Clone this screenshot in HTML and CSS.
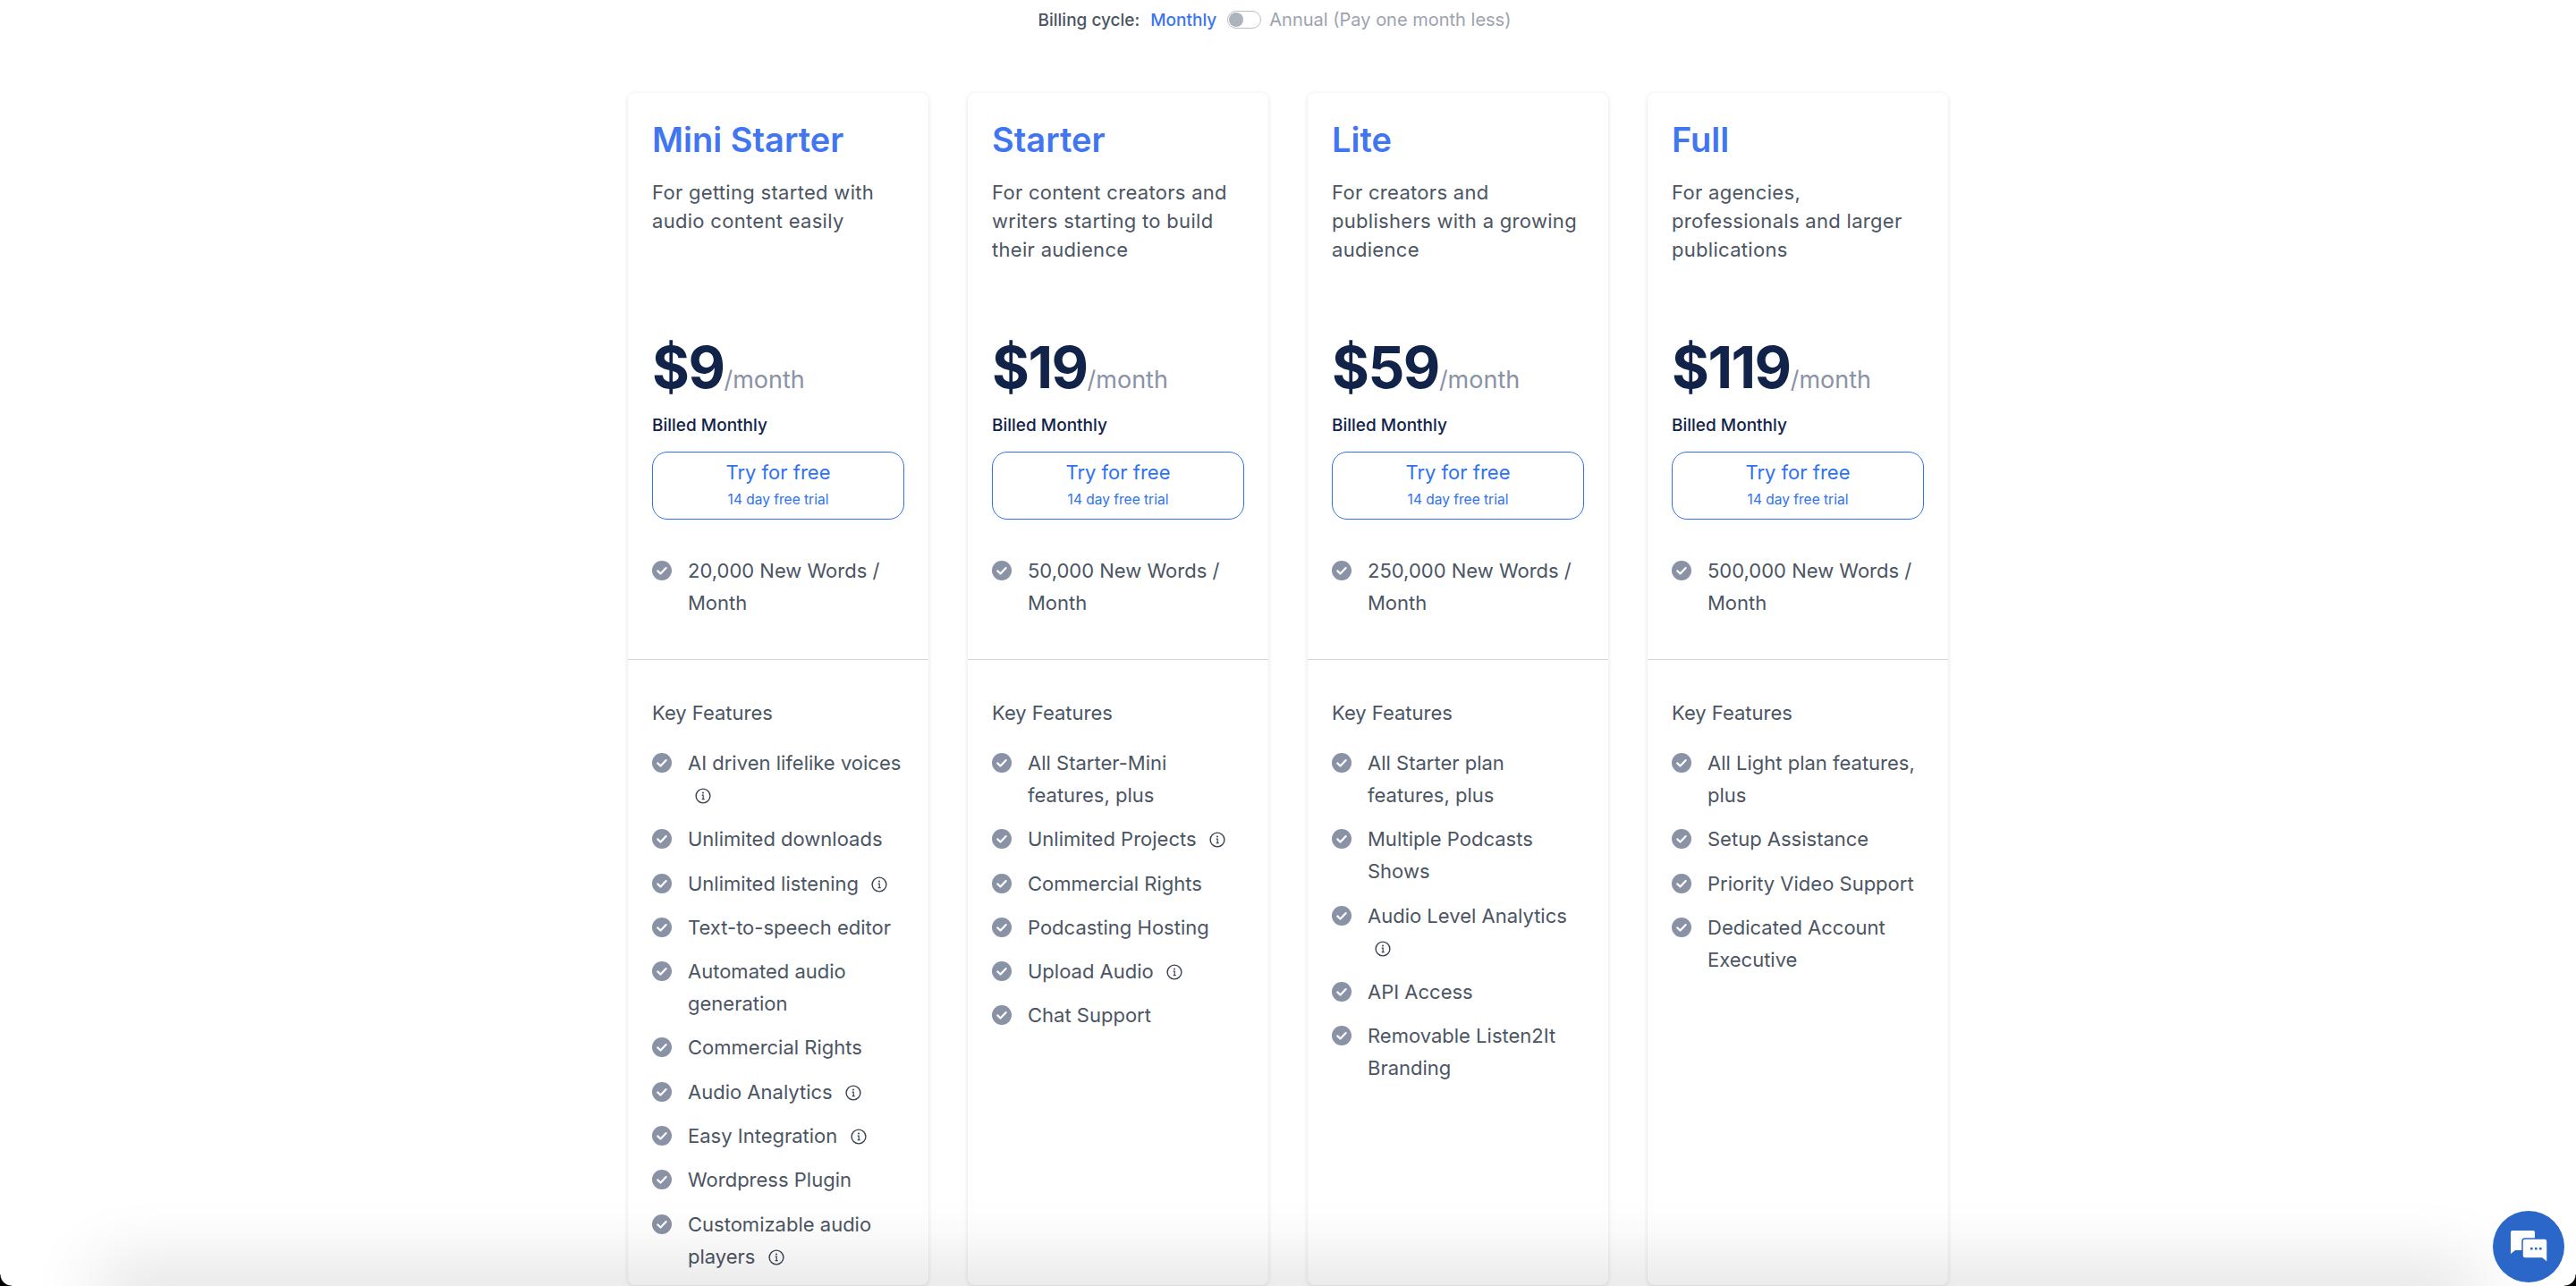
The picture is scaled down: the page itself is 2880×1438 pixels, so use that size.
FILE: index.html
```html
<!DOCTYPE html>
<html lang="en">
<head>
<meta charset="utf-8">
<title>Pricing</title>
<link rel="stylesheet" href="styles.css">
</head>
<body>
<svg class="defs" width="0" height="0" aria-hidden="true">
  <symbol id="chk" viewBox="0 0 22 22"><circle cx="11" cy="11" r="11" fill="#8a92a6"/><path d="M6.3 11.4l3.2 3.1 6.2-6.4" fill="none" stroke="#fff" stroke-width="2.2" stroke-linecap="round" stroke-linejoin="round"/></symbol>
  <symbol id="inf" viewBox="0 0 18 18"><circle cx="9" cy="9" r="7.9" fill="none" stroke="#374151" stroke-width="1.4"/><path d="M7.7 8.1H9.2V12.6M7.7 12.6h3" fill="none" stroke="#374151" stroke-width="1.2"/><circle cx="9" cy="5.6" r="1" fill="#374151"/></symbol>
</svg>
<header class="billing">
  <span class="billing-label">Billing cycle:</span>
  <span class="billing-active">Monthly</span>
  <span class="toggle"><span class="knob"></span></span>
  <span class="billing-off">Annual (Pay one month less)</span>
</header>
<main class="plans">
  <article class="card">
    <section class="top">
      <h2>Mini Starter</h2>
      <p class="desc">For getting started with audio content easily</p>
      <div class="price"><b>$9</b><span>/month</span></div>
      <p class="billed">Billed Monthly</p>
      <a class="cta"><span class="cta-main">Try for free</span><span class="cta-sub">14 day free trial</span></a>
      <ul class="list"><li><svg class="ck"><use href="#chk"/></svg><span>20,000 New Words / Month</span></li></ul>
    </section>
    <section class="bottom">
      <h3>Key Features</h3>
      <ul class="list">
        <li><svg class="ck"><use href="#chk"/></svg><span>AI driven lifelike voices <svg class="in"><use href="#inf"/></svg></span></li>
        <li><svg class="ck"><use href="#chk"/></svg><span>Unlimited downloads</span></li>
        <li><svg class="ck"><use href="#chk"/></svg><span>Unlimited listening <svg class="in"><use href="#inf"/></svg></span></li>
        <li><svg class="ck"><use href="#chk"/></svg><span>Text-to-speech editor</span></li>
        <li><svg class="ck"><use href="#chk"/></svg><span>Automated audio generation</span></li>
        <li><svg class="ck"><use href="#chk"/></svg><span>Commercial Rights</span></li>
        <li><svg class="ck"><use href="#chk"/></svg><span>Audio Analytics <svg class="in"><use href="#inf"/></svg></span></li>
        <li><svg class="ck"><use href="#chk"/></svg><span>Easy Integration <svg class="in"><use href="#inf"/></svg></span></li>
        <li><svg class="ck"><use href="#chk"/></svg><span>Wordpress Plugin</span></li>
        <li><svg class="ck"><use href="#chk"/></svg><span>Customizable audio players <svg class="in"><use href="#inf"/></svg></span></li>
      </ul>
    </section>
  </article>
  <article class="card">
    <section class="top">
      <h2>Starter</h2>
      <p class="desc">For content creators and writers starting to build their audience</p>
      <div class="price"><b>$19</b><span>/month</span></div>
      <p class="billed">Billed Monthly</p>
      <a class="cta"><span class="cta-main">Try for free</span><span class="cta-sub">14 day free trial</span></a>
      <ul class="list"><li><svg class="ck"><use href="#chk"/></svg><span>50,000 New Words / Month</span></li></ul>
    </section>
    <section class="bottom">
      <h3>Key Features</h3>
      <ul class="list">
        <li><svg class="ck"><use href="#chk"/></svg><span>All Starter-Mini features, plus</span></li>
        <li><svg class="ck"><use href="#chk"/></svg><span>Unlimited Projects <svg class="in"><use href="#inf"/></svg></span></li>
        <li><svg class="ck"><use href="#chk"/></svg><span>Commercial Rights</span></li>
        <li><svg class="ck"><use href="#chk"/></svg><span>Podcasting Hosting</span></li>
        <li><svg class="ck"><use href="#chk"/></svg><span>Upload Audio <svg class="in"><use href="#inf"/></svg></span></li>
        <li><svg class="ck"><use href="#chk"/></svg><span>Chat Support</span></li>
      </ul>
    </section>
  </article>
  <article class="card">
    <section class="top">
      <h2>Lite</h2>
      <p class="desc">For creators and publishers with a growing audience</p>
      <div class="price"><b>$59</b><span>/month</span></div>
      <p class="billed">Billed Monthly</p>
      <a class="cta"><span class="cta-main">Try for free</span><span class="cta-sub">14 day free trial</span></a>
      <ul class="list"><li><svg class="ck"><use href="#chk"/></svg><span>250,000 New Words / Month</span></li></ul>
    </section>
    <section class="bottom">
      <h3>Key Features</h3>
      <ul class="list">
        <li><svg class="ck"><use href="#chk"/></svg><span>All Starter plan features, plus</span></li>
        <li><svg class="ck"><use href="#chk"/></svg><span>Multiple Podcasts Shows</span></li>
        <li><svg class="ck"><use href="#chk"/></svg><span>Audio Level Analytics <svg class="in"><use href="#inf"/></svg></span></li>
        <li><svg class="ck"><use href="#chk"/></svg><span>API Access</span></li>
        <li><svg class="ck"><use href="#chk"/></svg><span>Removable Listen2It Branding</span></li>
      </ul>
    </section>
  </article>
  <article class="card">
    <section class="top">
      <h2>Full</h2>
      <p class="desc">For agencies, professionals and larger publications</p>
      <div class="price"><b>$119</b><span>/month</span></div>
      <p class="billed">Billed Monthly</p>
      <a class="cta"><span class="cta-main">Try for free</span><span class="cta-sub">14 day free trial</span></a>
      <ul class="list"><li><svg class="ck"><use href="#chk"/></svg><span>500,000 New Words / Month</span></li></ul>
    </section>
    <section class="bottom">
      <h3>Key Features</h3>
      <ul class="list">
        <li><svg class="ck"><use href="#chk"/></svg><span>All Light plan features, plus</span></li>
        <li><svg class="ck"><use href="#chk"/></svg><span>Setup Assistance</span></li>
        <li><svg class="ck"><use href="#chk"/></svg><span>Priority Video Support</span></li>
        <li><svg class="ck"><use href="#chk"/></svg><span>Dedicated Account Executive</span></li>
      </ul>
    </section>
  </article>
</main>
<div class="bottom-shade"></div>
<button class="chat" aria-label="Chat">
  <svg viewBox="0 0 41 36" width="41" height="36"><path d="M2 0h23a2 2 0 0 1 2 2v18a2 2 0 0 1-2 2H5l-5 4V2a2 2 0 0 1 2-2z" fill="#fff"/><path d="M16 9h22a3 3 0 0 1 3 3v24l-6-5H16a3 3 0 0 1-3-3V12a3 3 0 0 1 3-3z" fill="#fff" stroke="#2b67c8" stroke-width="1.5"/><path d="M22 19h2.6v2.4H22zM27 19h2.6v2.4H27zM32 19h2.6v2.4H32z" fill="#2b67c8"/></svg>
</button>
<span class="corner corner-left"></span>
<span class="corner corner-right"></span>
</body>
</html>
```
FILE: styles.css
```css
* { box-sizing: border-box; }
html, body { margin: 0; height: 1438px; overflow: hidden; background: #fff; }
body { font-family: Inter, "Noto Sans", sans-serif; color: #4b5563; position: relative; }
.defs { position: absolute; }
ul { list-style: none; margin: 0; padding: 0; }
p, h2, h3 { margin: 0; }

.billing { height: 44px; display: flex; align-items: center; justify-content: center; gap: 12px; font-size: 19px; padding-right: 30px; }
.billing-label { font-weight: 500; color: #4b5563; }
.billing-active { font-weight: 500; color: #3b74f0; }
.billing-off { color: #9ca3af; font-size: 20px; margin-left: -3px; }
.toggle { width: 38px; height: 20px; background: #fff; border: 1px solid #b9bdc5; border-radius: 10px; padding: 1px; display: flex; align-items: center; }
.knob { width: 16px; height: 16px; border-radius: 50%; background: #adb3bc; }

.plans { display: grid; grid-template-columns: repeat(4, 336px); gap: 44px; justify-content: center; margin-top: 60px; }
.card { background: #fff; border-radius: 8px; box-shadow: 0 1px 5px rgba(0, 0, 0, .12); height: 1333px; }
.top { padding: 27px 27px 0; height: 634px; border-bottom: 1px solid #d3d4d7; }
h2 { font-size: 38px; line-height: 50px; font-weight: 600; color: #4275f0; }
.desc { font-size: 22px; line-height: 32px; letter-spacing: .3px; margin-top: 18px; height: 174px; }
.price { display: flex; align-items: baseline; color: #12234a; height: 76px; }
.price b { font-size: 64px; line-height: 76px; font-weight: 700; letter-spacing: -1.5px; }
.price span { font-size: 27px; font-weight: 400; color: #8a92a6; }
.billed { font-size: 19px; line-height: 28px; font-weight: 500; color: #12234a; margin-top: 13px; }
.cta { display: flex; flex-direction: column; align-items: center; height: 76px; border: 1.5px solid #2f6ff0; border-radius: 17px; color: #2f72f0; margin-top: 15px; }
.cta-main { font-size: 22px; line-height: 28px; margin-top: 8px; }
.cta-sub { font-size: 15.5px; line-height: 22px; margin-top: 6px; }
.top .list { margin-top: 39px; }
.list { display: flex; flex-direction: column; gap: 13.3px; }
.list li { display: flex; gap: 18px; font-size: 22px; line-height: 36px; }
.list li > span { min-width: 0; }
.ck { width: 22px; height: 22px; flex: none; margin-top: 7px; }
.in { width: 18px; height: 18px; vertical-align: -2px; margin-left: 8px; }

.bottom { padding: 42px 27px 0; }
h3 { font-size: 22px; line-height: 34px; font-weight: 400; margin-bottom: 21px; }

.bottom-shade { position: absolute; left: 130px; right: 130px; bottom: -20px; height: 20px; box-shadow: 0 0 80px 20px rgba(0, 0, 0, .14); pointer-events: none; }
.chat { position: absolute; left: 2787px; top: 1354px; width: 80px; height: 80px; border: 0; border-radius: 50%; background: #2b67c8; padding: 0; display: flex; align-items: center; justify-content: center; }
.corner { position: absolute; bottom: 0; width: 13px; height: 13px; }
.corner-left { left: 0; background: radial-gradient(circle at 100% 0, transparent 12px, #000 13px); }
.corner-right { right: 0; background: radial-gradient(circle at 0 0, transparent 12px, #000 13px); }
```
